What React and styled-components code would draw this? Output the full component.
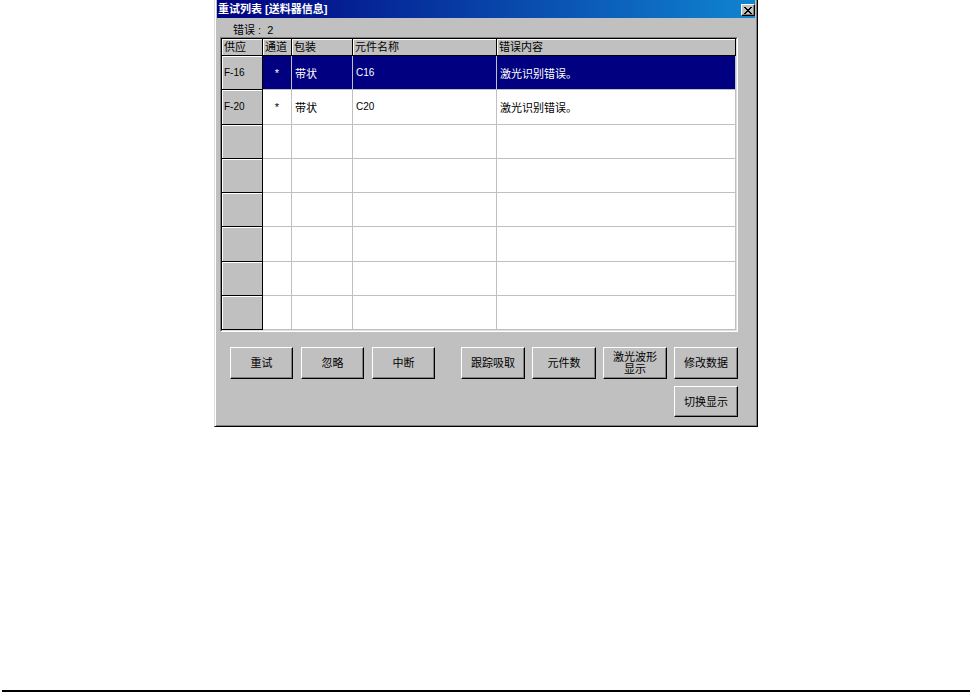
import React from "react";
import styled, { createGlobalStyle } from "styled-components";

const Global = createGlobalStyle`
  html, body { margin: 0; padding: 0; background: #fff; }
  body {
    font-family: "Liberation Sans", "Noto Sans CJK SC", sans-serif;
    font-size: 11px;
    color: #000;
  }
  * { box-sizing: border-box; }
`;

const Page = styled.div`
  height: 692px;
  display: flex;
  flex-direction: column;
  align-items: center;
  padding-left: 2px;
`;

const Dialog = styled.div`
  width: 544px;
  height: 427px;
  background: #c0c0c0;
  border-left: 1px solid #dfdfdf;
  border-right: 1px solid #000;
  border-bottom: 1px solid #000;
  box-shadow: inset 1px 0 #fff, inset -1px -1px #808080;
  padding: 0 2px 2px 2px;
  display: flex;
  flex-direction: column;
`;

const TitleBar = styled.div`
  height: 18px;
  flex: none;
  background: linear-gradient(90deg, #000080 0%, #1084d0 100%);
  display: flex;
  align-items: center;
  justify-content: space-between;
  padding: 0 0 0 1px;
`;

const Title = styled.span`
  color: #fff;
  font-weight: bold;
  font-size: 11px;
  line-height: 12px;
  white-space: pre;
`;

const CloseButton = styled.div`
  width: 14px;
  height: 12px;
  margin-top: 2px;
  background: #c0c0c0;
  border: 1px solid;
  border-color: #fff #000 #000 #fff;
  box-shadow: inset -1px -1px #808080;
  display: flex;
  align-items: center;
  justify-content: center;
`;

const Body = styled.div`
  flex: 1;
  display: flex;
  flex-direction: column;
  padding: 0 17px 0 3px;
`;

const ErrorLabel = styled.div`
  height: 19px;
  padding: 6px 0 0 13px;
  line-height: 12px;
  white-space: pre;
`;

const Frame = styled.div`
  height: 295px;
  border: 1px solid;
  border-color: #808080 #fff #fff #808080;
`;

const FrameInner = styled.div`
  height: 100%;
  border: 1px solid;
  border-color: #000 #dfdfdf #dfdfdf #000;
  background: #fff;
  display: grid;
  grid-template-columns: 41px 29px 61px 144px 1fr;
  grid-template-rows: 17px repeat(8, 1fr);
`;

const HeadCell = styled.div`
  background: #c0c0c0;
  border-right: 1px solid #000;
  border-bottom: 1px solid #000;
  box-shadow: inset 1px 1px #fff;
  padding: 0 0 0 2px;
  display: flex;
  align-items: center;
  line-height: 12px;
  white-space: nowrap;
  overflow: hidden;
`;

const RowHead = styled.div`
  background: #c0c0c0;
  border-right: 1px solid #000;
  border-bottom: 1px solid #000;
  box-shadow: inset 1px 1px #fff;
  padding-left: 2px;
  display: flex;
  align-items: center;
  font-family: "Liberation Sans", sans-serif;
  font-size: 10px;
`;

const Cell = styled.div`
  background: ${(p) => (p.$selected ? "#000080" : "#fff")};
  color: ${(p) => (p.$selected ? "#fff" : "#000")};
  border-right: 1px solid #c0c0c0;
  border-bottom: 1px solid #c0c0c0;
  display: flex;
  align-items: center;
  justify-content: ${(p) => (p.$center ? "center" : "flex-start")};
  padding-left: ${(p) => (p.$center ? "0" : "3px")};
  font-size: ${(p) => (p.$latin ? "10px" : "11px")};
  white-space: nowrap;
  overflow: hidden;
`;

const Buttons = styled.div`
  margin: 15px 0 0 10px;
  display: flex;
  flex-direction: column;
  gap: 7px;
`;

const ButtonRow = styled.div`
  display: flex;
  justify-content: ${(p) => (p.$end ? "flex-end" : "space-between")};
`;

const Group = styled.div`
  display: flex;
  gap: ${(p) => p.$gap}px;
`;

const Button = styled.div`
  width: ${(p) => p.$w}px;
  height: ${(p) => p.$h}px;
  background: #c0c0c0;
  border: 1px solid;
  border-color: #fff #000 #000 #fff;
  box-shadow: inset -1px -1px #808080;
  display: flex;
  align-items: center;
  justify-content: center;
  text-align: center;
  font-size: 11px;
  line-height: 12px;
`;

const BottomRule = styled.div`
  margin-top: auto;
  width: 100%;
  height: 2px;
  background: #000;
`;

const rows = [
  { supply: "F-16", ch: "*", pkg: "带状", part: "C16", err: "激光识别错误。", selected: true },
  { supply: "F-20", ch: "*", pkg: "带状", part: "C20", err: "激光识别错误。" },
  {}, {}, {}, {}, {}, {},
];

export default function App() {
  return (
    <Page>
      <Global />
      <Dialog>
        <TitleBar>
          <Title>重试列表 [送料器信息]</Title>
          <CloseButton>
            <svg width="8" height="7" viewBox="0 0 8 7" shapeRendering="crispEdges">
              <path d="M0 0h2v1H0zM6 0h2v1H6zM1 1h2v1H1zM5 1h2v1H5zM2 2h4v1H2zM3 3h2v1H3zM2 4h4v1H2zM1 5h2v1H1zM5 5h2v1H5zM0 6h2v1H0zM6 6h2v1H6z" fill="#000" />
            </svg>
          </CloseButton>
        </TitleBar>
        <Body>
          <ErrorLabel>错误 :  2</ErrorLabel>
          <Frame>
            <FrameInner>
              <HeadCell>供应</HeadCell>
              <HeadCell>通道</HeadCell>
              <HeadCell>包装</HeadCell>
              <HeadCell>元件名称</HeadCell>
              <HeadCell>错误内容</HeadCell>
              {rows.map((r, i) => (
                <React.Fragment key={i}>
                  <RowHead>{r.supply || ""}</RowHead>
                  <Cell $selected={r.selected} $center>{r.ch || ""}</Cell>
                  <Cell $selected={r.selected}>{r.pkg || ""}</Cell>
                  <Cell $selected={r.selected} $latin>{r.part || ""}</Cell>
                  <Cell $selected={r.selected}>{r.err || ""}</Cell>
                </React.Fragment>
              ))}
            </FrameInner>
          </Frame>
          <Buttons>
            <ButtonRow>
              <Group $gap={8}>
                <Button $w={63} $h={32}>重试</Button>
                <Button $w={63} $h={32}>忽略</Button>
                <Button $w={63} $h={32}>中断</Button>
              </Group>
              <Group $gap={7}>
                <Button $w={64} $h={32}>跟踪吸取</Button>
                <Button $w={64} $h={32}>元件数</Button>
                <Button $w={64} $h={32}>激光波形<br />显示</Button>
                <Button $w={64} $h={32}>修改数据</Button>
              </Group>
            </ButtonRow>
            <ButtonRow $end>
              <Button $w={64} $h={31}>切换显示</Button>
            </ButtonRow>
          </Buttons>
        </Body>
      </Dialog>
      <BottomRule />
    </Page>
  );
}
